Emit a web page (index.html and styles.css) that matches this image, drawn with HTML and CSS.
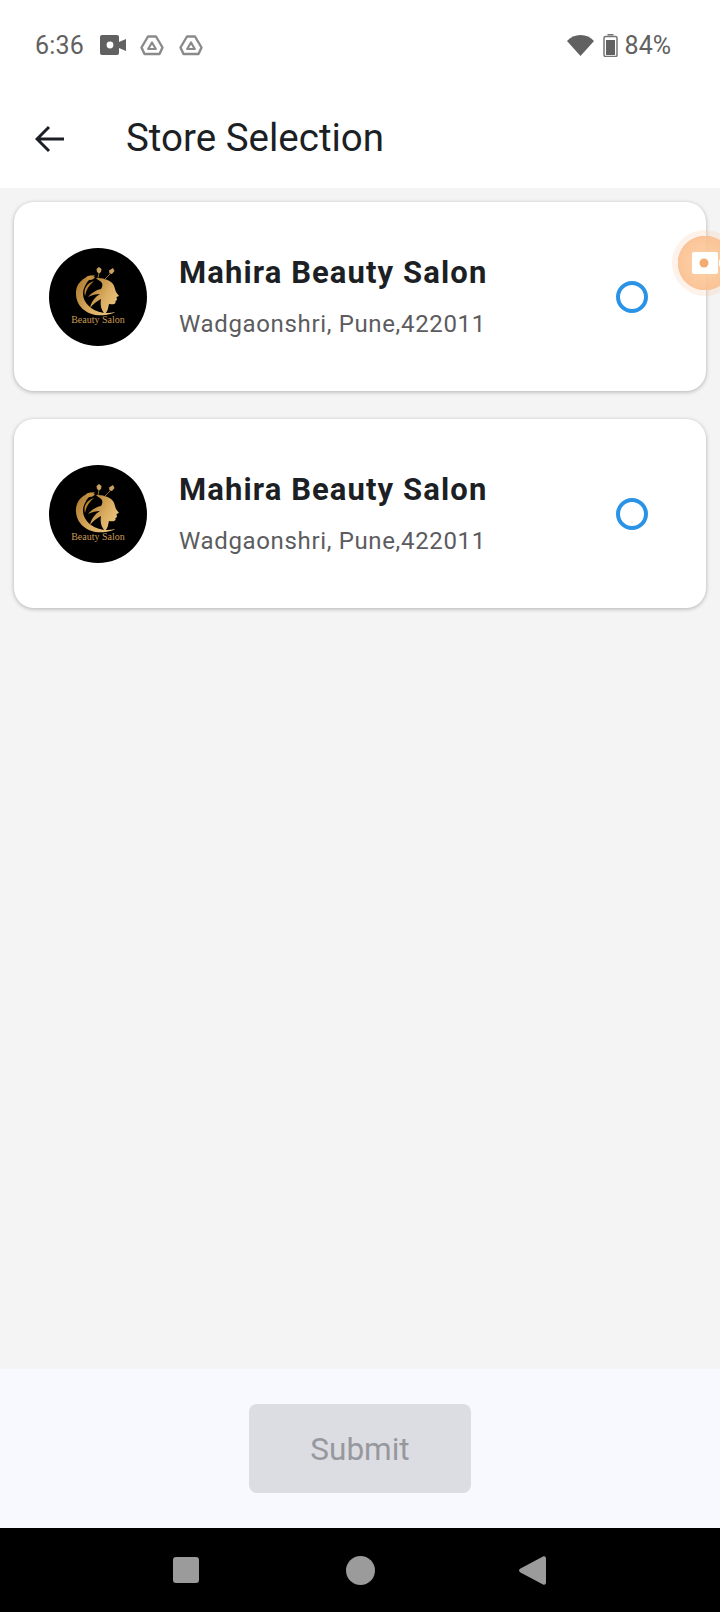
FILE: index.html
```html
<!DOCTYPE html>
<html lang="en">
<head>
  <meta charset="UTF-8">
  <title>Store Selection</title>
  <link rel="stylesheet" href="styles.css">
</head>
<body>
  <svg class="defs" width="0" height="0">
    <defs>
      <linearGradient id="gold" x1="0" y1="0" x2="1" y2="0.6">
        <stop offset="0" stop-color="#a8752a"/>
        <stop offset="0.65" stop-color="#dcae62"/>
        <stop offset="1" stop-color="#e8c27e"/>
      </linearGradient>
      <symbol id="logo" viewBox="0 0 98 98">
        <path d="M46 27C33 28 26 37 27 47c1 13 13 22 29 20 6-1 9-2 10-3-8 2-17 1-24-4-8-6-10-15-6-22 2-5 6-8 10-11z" fill="url(#gold)"/>
        <path d="M45 33c-7 2-11 8-9 15 1-6 4-11 9-15z" fill="#b9842f"/>
        <path d="M47 30c6 0 13 1 17 6 2 3 2 6 3 8l3 4-2.500 1 .5 3-1.500 1v2c-1.500 2-4.500 1-6.500 1-1 4-1 7-4 10-4-4-5-9-4-15-4 2-8 5-11 9 1-6 5-11 10-14-4 0-8 1-12 3 3-4 8-7 13-8 2-3 2-6-1-8-2-1-3-2-4-3z" fill="url(#gold)"/>
        <path d="M37 29c3-2 6-2 9 0-1 2-3 3-5 3s-3-1-4-3z" fill="#c8933f"/>
        <path d="M50 19l2.500 2-.5 3-2 1.500-2-1.500-.5-3zM64 20l1.500 3-2.500 3-2.500-.5-.5-3z" fill="#c8a060"/>
        <path d="M50 25l-1 5M61 26l-6 6" fill="none" stroke="#b9842f" stroke-width="0.800"/>
      </symbol>
    </defs>
  </svg>

  <div class="top">
    <div class="statusbar">
      <span class="time">6:36</span>
      <svg class="ic-cam" width="26" height="20" viewBox="0 0 26 20"><path d="M2 0h15a2 2 0 0 1 2 2v16a2 2 0 0 1-2 2H2a2 2 0 0 1-2-2V2a2 2 0 0 1 2-2zM19 7l7-3v12l-7-3z" fill="#616161"/><circle cx="10" cy="10" r="3.400" fill="#fff"/></svg>
      <svg class="ic-drive" width="24" height="21" viewBox="0 0 24 21"><path d="M8 1.500h8l6.500 11-3 6.500H4.500l-3-6.500z" fill="none" stroke="#8a8a8a" stroke-width="2.400" stroke-linejoin="round"/><path d="M12 7.500l3.800 6.500H8.200z" fill="none" stroke="#8a8a8a" stroke-width="2.200" stroke-linejoin="round"/></svg>
      <svg class="ic-drive" width="24" height="21" viewBox="0 0 24 21"><path d="M8 1.500h8l6.500 11-3 6.500H4.500l-3-6.500z" fill="none" stroke="#8a8a8a" stroke-width="2.400" stroke-linejoin="round"/><path d="M12 7.500l3.800 6.500H8.200z" fill="none" stroke="#8a8a8a" stroke-width="2.200" stroke-linejoin="round"/></svg>
      <span class="spacer"></span>
      <svg class="ic-wifi" width="27" height="22" viewBox="0 0 27 22"><path d="M0 7C3.500 3 8 1 13.500 1S23.500 3 27 7L13.500 22z" fill="#616161"/></svg>
      <svg class="ic-batt" width="15" height="23" viewBox="0 0 15 23"><path d="M4.500 0h6v1.500h-6z" fill="#757575"/><rect x="1" y="2.500" width="13" height="20" rx="1.500" fill="none" stroke="#757575" stroke-width="1.500"/><rect x="3" y="6" width="9" height="15" fill="#616161"/></svg>
      <span class="pct">84%</span>
    </div>
    <header class="appbar">
      <svg class="back" width="30" height="28" viewBox="0 0 30 28"><path d="M14 2L2 14l12 12M2 14h27" fill="none" stroke="#1c1f24" stroke-width="3"/></svg>
      <h1>Store Selection</h1>
    </header>
  </div>

  <main class="list">
    <div class="card">
      <div class="avatar">
        <svg width="98" height="98"><use href="#logo"/></svg>
        <span class="logo-text">Beauty Salon</span>
      </div>
      <div class="info">
        <div class="name">Mahira Beauty Salon</div>
        <div class="addr">Wadgaonshri, Pune,422011</div>
      </div>
      <span class="radio"></span>
    </div>
    <div class="card">
      <div class="avatar">
        <svg width="98" height="98"><use href="#logo"/></svg>
        <span class="logo-text">Beauty Salon</span>
      </div>
      <div class="info">
        <div class="name">Mahira Beauty Salon</div>
        <div class="addr">Wadgaonshri, Pune,422011</div>
      </div>
      <span class="radio"></span>
    </div>
  </main>

  <div class="footer">
    <button class="submit" disabled>Submit</button>
  </div>

  <nav class="navbar">
    <svg width="26" height="26" viewBox="0 0 26 26"><rect width="26" height="26" rx="3" fill="#9b9b9b"/></svg>
    <svg width="29" height="29" viewBox="0 0 29 29"><circle cx="14.500" cy="14.500" r="14.500" fill="#9b9b9b"/></svg>
    <svg width="27" height="29" viewBox="0 0 27 29"><path d="M24 .5c2-.8 3 .5 3 2v24c0 1.500-1 2.800-3 2L1.500 16.500c-2-1.200-2-2.800 0-4z" fill="#9b9b9b"/></svg>
  </nav>

  <div class="bubble">
    <svg width="34" height="22" viewBox="0 0 34 22"><path d="M2 0h22a2 2 0 0 1 2 2v18a2 2 0 0 1-2 2H2a2 2 0 0 1-2-2V2a2 2 0 0 1 2-2zM27 8l7-4v14l-7-4z" fill="#fff"/><circle cx="12" cy="11" r="4.500" fill="#f3ab6f"/></svg>
  </div>
</body>
</html>
```

FILE: styles.css
```css
* { box-sizing: border-box; }

html, body { margin: 0; padding: 0; }

body {
  width: 720px;
  height: 1612px;
  display: flex;
  flex-direction: column;
  position: relative;
  overflow: hidden;
  background: #f4f4f4;
  font-family: Roboto, "Liberation Sans", sans-serif;
}

.defs { position: absolute; }

.top { height: 188px; background: #fff; flex: none; }

.statusbar {
  height: 92px;
  padding: 0 49px 2px 35px;
  display: flex;
  align-items: center;
  color: #616161;
}
.time { font-size: 25px; letter-spacing: 0.2px; }
.ic-cam { margin-left: 16px; }
.ic-drive { margin-left: 14px; }
.ic-drive + .ic-drive { margin-left: 15px; }
.spacer { flex: 1; }
.ic-batt { margin-left: 9px; }
.pct { font-size: 25px; margin-left: 7px; }

.appbar { height: 96px; padding: 0 0 2px 35px; display: flex; align-items: center; }
.back { flex: none; }
.appbar h1 {
  margin: 0 0 4px 61px;
  font-size: 38.500px;
  font-weight: 400;
  color: #1c1f24;
}

.list {
  flex: 1;
  padding: 14px 14px 0;
  display: flex;
  flex-direction: column;
  gap: 28px;
}

.card {
  height: 189px;
  padding: 0 58px 0 35px;
  display: flex;
  align-items: center;
  background: #fff;
  border-radius: 20px;
  box-shadow: 0 1px 4px rgba(0, 0, 0, 0.28);
}

.avatar {
  width: 98px;
  height: 98px;
  border-radius: 50%;
  background: #000;
  position: relative;
  flex: none;
}
.avatar svg { display: block; }
.logo-text {
  position: absolute;
  left: 0;
  right: 0;
  top: 66px;
  text-align: center;
  font-family: "Liberation Serif", serif;
  font-size: 10px;
  color: #c99a52;
}

.info { margin-left: 32px; flex: 1; padding-bottom: 2px; }
.name {
  font-size: 31px;
  font-weight: 700;
  letter-spacing: 1.100px;
  color: #1c1f24;
}
.addr {
  margin-top: 19px;
  font-size: 24px;
  letter-spacing: 0.650px;
  color: #5c5c5f;
}

.radio {
  width: 32px;
  height: 32px;
  border: 4px solid #2b93e6;
  border-radius: 50%;
  flex: none;
  margin-left: -1px;
}

.footer {
  height: 159px;
  flex: none;
  background: #f8f9fe;
  padding-top: 35px;
  display: flex;
  justify-content: center;
  align-items: flex-start;
}
.submit {
  width: 222px;
  height: 89px;
  border: 0;
  border-radius: 8px;
  background: #dcdde2;
  color: #97989d;
  font-family: inherit;
  font-size: 31.500px;
  padding: 2px 0 0;
}

.navbar {
  height: 84px;
  flex: none;
  background: #000;
  display: flex;
  align-items: center;
  position: relative;
}
.navbar svg { position: absolute; }
.navbar svg:nth-child(1) { left: 173px; }
.navbar svg:nth-child(2) { left: 346px; }
.navbar svg:nth-child(3) { left: 519px; }

.bubble {
  position: absolute;
  left: 672px;
  top: 230px;
  width: 66px;
  height: 66px;
  border-radius: 50%;
  background: radial-gradient(circle, rgba(253, 208, 160, 0.9) 0, rgba(250, 188, 138, 0.88) 27px, rgba(248, 190, 150, 0.2) 27.500px);
  display: flex;
  align-items: center;
  padding-left: 20px;
}
.bubble svg { flex: none; }
```
